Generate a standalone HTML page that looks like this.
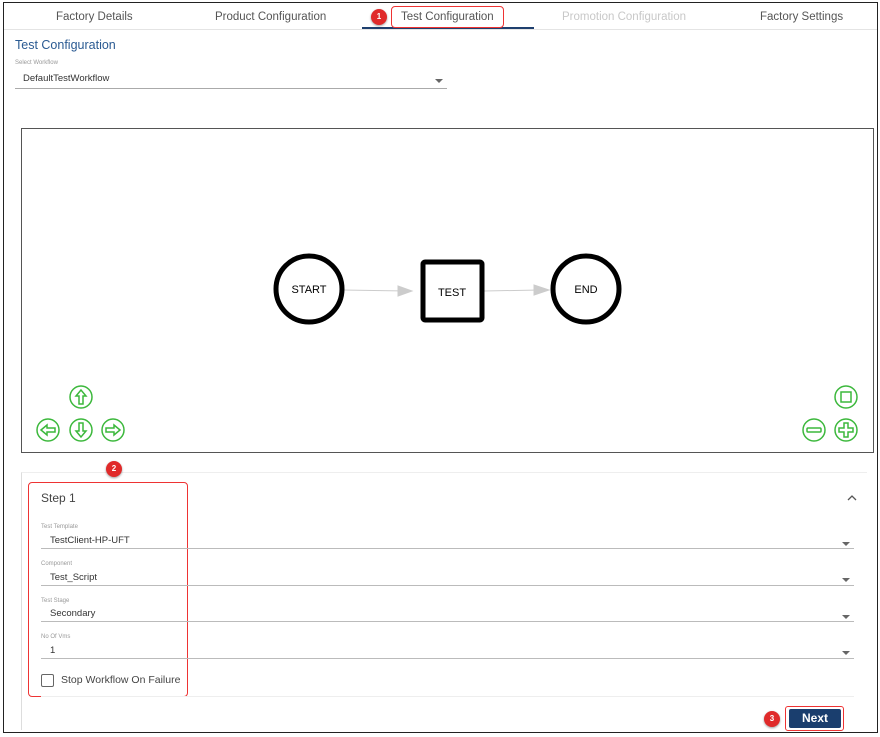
<!DOCTYPE html>
<html><head><style>
*{margin:0;padding:0;box-sizing:border-box}
body{width:880px;height:737px;background:#fff;font-family:"Liberation Sans",sans-serif;position:relative;overflow:hidden}
.a{position:absolute}
.tab{position:absolute;top:11px;font-size:11.5px;color:#555}
.lbl{position:absolute;font-size:6px;color:#999}
.val{position:absolute;font-size:9.5px;color:#333}
.line{position:absolute;height:1px;background:#aaa}
.tri{position:absolute;width:0;height:0;border-left:4px solid transparent;border-right:4px solid transparent;border-top:4px solid #666}
.badge{position:absolute;width:16px;height:16px;border-radius:50%;background:#e02a2a;color:#fff;font-size:8px;font-weight:bold;text-align:center;line-height:16px;box-shadow:0 1px 2px rgba(0,0,0,.4)}
</style></head><body>
<div class="a" style="left:3px;top:2px;width:875px;height:731px;border:1px solid #222"></div>
<div class="a" style="left:4px;top:29px;width:873px;height:1px;background:#e4e4e4"></div>
<div class="tab" style="left:56px">Factory Details</div>
<div class="tab" style="left:215px">Product Configuration</div>
<div class="tab" style="left:401px">Test Configuration</div>
<div class="tab" style="left:562px;color:#c8c8c8">Promotion Configuration</div>
<div class="tab" style="left:760px">Factory Settings</div>
<div class="a" style="left:362px;top:27px;width:172px;height:2px;background:#1e3f6e"></div>
<div class="a" style="left:391px;top:6px;width:113px;height:22px;border:1.5px solid #e33;border-radius:4px"></div>
<div class="badge" style="left:371px;top:9px">1</div>
<div class="a" style="left:15px;top:38px;font-size:12.5px;color:#2a5a92">Test Configuration</div>
<div class="lbl" style="left:15px;top:60px">Select Workflow</div>
<div class="val" style="left:23px;top:73px">DefaultTestWorkflow</div>
<div class="line" style="left:15px;top:88px;width:432px"></div>
<div class="tri" style="left:435px;top:79px"></div>
<div class="a" style="left:21px;top:128px;width:853px;height:325px;border:1px solid #555"></div>
<svg class="a" style="left:0;top:0" width="880" height="737">
<g stroke="#ccc" stroke-width="1" fill="#ccc">
<line x1="342" y1="290" x2="408" y2="291"/><polygon points="398,286 412,291 398,296"/>
<line x1="484" y1="291" x2="540" y2="290"/><polygon points="534,285 549,290 534,295"/>
</g>
<circle cx="309" cy="289" r="33" fill="#fff" stroke="#000" stroke-width="5"/>
<rect x="423" y="262" width="59" height="58" fill="#fff" stroke="#000" stroke-width="5" rx="2"/>
<circle cx="586" cy="289" r="33" fill="#fff" stroke="#000" stroke-width="5"/>
<text x="309" y="293" font-size="11" text-anchor="middle" font-family="Liberation Sans">START</text>
<text x="452" y="296" font-size="11" text-anchor="middle" font-family="Liberation Sans">TEST</text>
<text x="586" y="293" font-size="11" text-anchor="middle" font-family="Liberation Sans">END</text>
<g fill="none" stroke="#3cb83c" stroke-width="1.5">
<circle cx="81" cy="397" r="11"/><circle cx="48" cy="430" r="11"/><circle cx="81" cy="430" r="11"/><circle cx="113" cy="430" r="11"/>
<circle cx="846" cy="397" r="11"/><circle cx="814" cy="430" r="11"/><circle cx="846" cy="430" r="11"/>
<path d="M81 390l-5 6h3v8h4v-8h3z"/>
<path d="M81 437l-5-6h3v-8h4v8h3z"/>
<path d="M41 430l6-5v3h8v4h-8v3z"/>
<path d="M120 430l-6-5v3h-8v4h8v3z"/>
<rect x="807" y="428" width="14" height="4" rx="1"/>
<path d="M844 423h4v5h5v4h-5v5h-4v-5h-5v-4h5z"/>
<rect x="841" y="392" width="10" height="10"/>
</g>
<path d="M848 500l4-4 4 4" stroke="#555" stroke-width="1.3" fill="none"/>
</svg>
<div class="a" style="left:21px;top:472px;width:846px;height:258px;border-top:1px solid #eee;border-left:1px solid #ddd"></div>
<div class="a" style="left:28px;top:482px;width:160px;height:215px;border:1.5px solid #e33;border-radius:4px"></div>
<div class="badge" style="left:106px;top:461px">2</div>
<div class="a" style="left:41px;top:491px;font-size:12px;color:#444">Step 1</div>
<div class="lbl" style="left:41px;top:524px">Test Template</div>
<div class="val" style="left:50px;top:535px">TestClient-HP-UFT</div>
<div class="line" style="left:41px;top:548px;width:813px;background:#bbb"></div>
<div class="tri" style="left:842px;top:542px"></div>
<div class="lbl" style="left:41px;top:561px">Component</div>
<div class="val" style="left:50px;top:572px">Test_Script</div>
<div class="line" style="left:41px;top:585px;width:813px;background:#bbb"></div>
<div class="tri" style="left:842px;top:578px"></div>
<div class="lbl" style="left:41px;top:598px">Test Stage</div>
<div class="val" style="left:50px;top:608px">Secondary</div>
<div class="line" style="left:41px;top:621px;width:813px;background:#bbb"></div>
<div class="tri" style="left:842px;top:615px"></div>
<div class="lbl" style="left:41px;top:634px">No Of Vms</div>
<div class="val" style="left:50px;top:645px">1</div>
<div class="line" style="left:41px;top:658px;width:813px;background:#bbb"></div>
<div class="tri" style="left:842px;top:651px"></div>
<div class="a" style="left:41px;top:674px;width:13px;height:13px;border:1.5px solid #666;border-radius:2px"></div>
<div class="a" style="left:61px;top:674px;font-size:10.5px;color:#444">Stop Workflow On Failure</div>
<div class="line" style="left:41px;top:696px;width:813px;background:#eee"></div>
<div class="a" style="left:785px;top:706px;width:59px;height:25px;border:1.5px solid #e33;border-radius:3px"></div>
<div class="a" style="left:789px;top:709px;width:52px;height:19px;background:#1a3e6e;color:#fff;font-size:12px;font-weight:bold;text-align:center;line-height:19px;border-radius:2px">Next</div>
<div class="badge" style="left:764px;top:711px">3</div>
</body></html>
